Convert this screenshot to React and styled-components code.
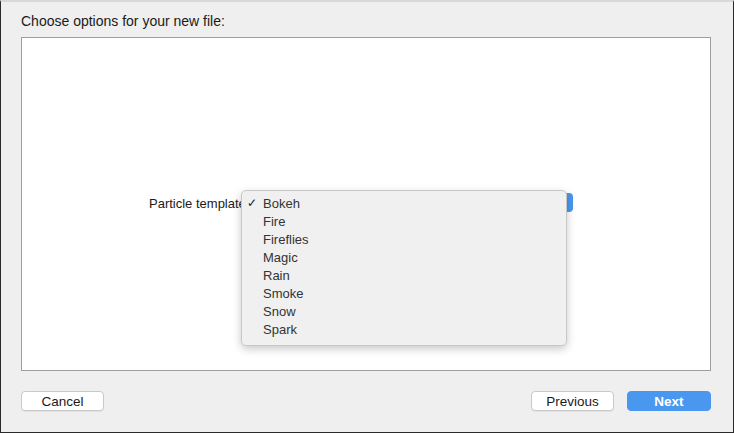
import React from "react";
import styled, { createGlobalStyle } from "styled-components";

const Global = createGlobalStyle`
  html, body { margin: 0; padding: 0; background: #ececec; }
  * { box-sizing: border-box; }
`;

const Sheet = styled.div`
  width: 734px;
  height: 433px;
  background: #efefef;
  border-left: 1px solid #2a2a2a;
  border-right: 1px solid #2a2a2a;
  border-bottom: 1px solid #2a2a2a;
  border-top: 2px solid #d8d8d8;
  display: flex;
  flex-direction: column;
  padding: 11px 22px 0 20px;
  font-family: "Liberation Sans", Arial, sans-serif;
  font-size: 13px;
  color: #1a1a1a;
`;

const Title = styled.div`
  height: 24px;
  line-height: 16px;
  font-size: 14px;
`;

const Panel = styled.div`
  height: 334px;
  background: #ffffff;
  border: 1px solid #9e9e9e;
  display: flex;
  flex-direction: column;
  padding: 152px 0 0 0;
`;

const FieldRow = styled.div`
  display: flex;
  align-items: flex-start;
  padding-left: 127px;
`;

const Label = styled.div`
  width: 96px;
  text-align: right;
  line-height: 16px;
  padding-top: 6px;
  white-space: nowrap;
  overflow: hidden;
`;

const PopupWrap = styled.div`
  position: relative;
  width: 332px;
  height: 20px;
  margin-left: -4px;
  margin-top: 3px;
`;

const PopupButton = styled.div`
  position: absolute;
  left: 4px;
  right: 0;
  top: 0;
  height: 19px;
  border-radius: 4px;
  background: #4a97f0;
`;

const Menu = styled.div`
  position: absolute;
  left: 0;
  top: -3px;
  width: 326px;
  height: 156px;
  background: #f0f0f0;
  border: 1px solid #c8c8c8;
  border-radius: 5px;
  box-shadow: 0 3px 8px rgba(0, 0, 0, 0.22);
  padding: 3px 0 0 0;
  display: flex;
  flex-direction: column;
`;

const Item = styled.div`
  display: flex;
  align-items: center;
  height: 18px;
  color: #333333;
  font-size: 13px;
`;

const Check = styled.span`
  width: 21px;
  padding-left: 5px;
  font-size: 12px;
  color: #222;
`;

const Footer = styled.div`
  display: flex;
  align-items: center;
  padding-top: 20px;
  gap: 13px;
`;

const Spacer = styled.div`
  flex: 1;
`;

const Button = styled.button`
  width: ${(p) => (p.$wide ? 84 : 83)}px;
  height: 20px;
  border-radius: 4px;
  font-family: "Liberation Sans", Arial, sans-serif;
  font-size: 13.5px;
  font-weight: ${(p) => (p.$primary ? 700 : 400)};
  padding: 0;
  border: 1px solid ${(p) => (p.$primary ? "#4a97f0" : "#c9c9c9")};
  background: ${(p) => (p.$primary ? "#4a97f0" : "#ffffff")};
  color: ${(p) => (p.$primary ? "#ffffff" : "#1a1a1a")};
  box-shadow: ${(p) => (p.$primary ? "none" : "0 1px 0 rgba(0,0,0,0.05)")};
`;

const items = ["Bokeh", "Fire", "Fireflies", "Magic", "Rain", "Smoke", "Snow", "Spark"];

export default function App() {
  return (
    <>
      <Global />
      <Sheet>
        <Title>Choose options for your new file:</Title>
        <Panel>
          <FieldRow>
            <Label>Particle template</Label>
            <PopupWrap>
              <PopupButton />
              <Menu>
                {items.map((it, i) => (
                  <Item key={it}>
                    <Check>{i === 0 ? "✓" : ""}</Check>
                    {it}
                  </Item>
                ))}
              </Menu>
            </PopupWrap>
          </FieldRow>
        </Panel>
        <Footer>
          <Button>Cancel</Button>
          <Spacer />
          <Button>Previous</Button>
          <Button $primary $wide>Next</Button>
        </Footer>
      </Sheet>
    </>
  );
}
